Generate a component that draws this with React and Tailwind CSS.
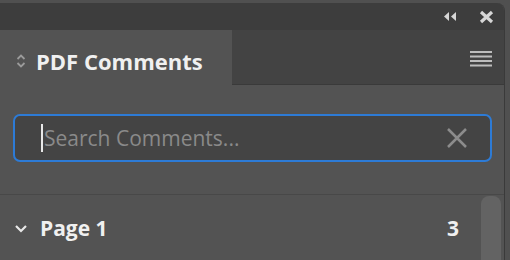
import React from 'react';

function ChevronUpDown() {
  return (
    <svg width="10" height="18" viewBox="0 0 10 18" fill="none" stroke="#9a9a9a" strokeWidth="1.8">
      <path d="M1.5 7 L5 3.5 L8.5 7" />
      <path d="M1.5 11 L5 14.5 L8.5 11" />
    </svg>
  );
}

function App() {
  return (
    <div className="w-[510px] h-[260px] bg-[#505050] overflow-hidden pt-[3px]" style={{ fontFamily: '"Open Sans", "Noto Sans", sans-serif' }}>
      <div className="w-[505px] h-[257px] bg-[#535353] rounded-tr-[8px] border-r border-[#3a3a3a] flex flex-col overflow-hidden">
        {/* title strip */}
        <div className="h-[28px] bg-[#3d3d3d] flex items-center justify-end pr-[10px] gap-[22px]">
          <svg width="14" height="11" viewBox="0 0 14 11" fill="#d6d6d6">
            <path d="M6 1 L1 5.5 L6 10 Z" />
            <path d="M13 1 L8 5.5 L13 10 Z" />
          </svg>
          <svg width="15" height="14" viewBox="0 0 15 14" stroke="#d6d6d6" strokeWidth="3.2">
            <path d="M2 2 L13 12 M13 2 L2 12" />
          </svg>
        </div>
        {/* tabs */}
        <div className="h-[57px] flex">
          <div className="w-[232px] bg-[#535353] flex items-center pl-[16px] pt-[6px] gap-[10px]">
            <ChevronUpDown />
            <span className="text-[22px] font-bold text-[#f0f0f0] leading-none">PDF Comments</span>
          </div>
          <div className="flex-1 bg-[#434343] border-b border-[#3a3a3a] flex items-center justify-end pr-[12px] pt-[4px]">
            <svg width="22" height="16" viewBox="0 0 22 16" fill="#bdbdbd">
              <rect x="0" y="0" width="22" height="2" />
              <rect x="0" y="4.5" width="22" height="2" />
              <rect x="0" y="9" width="22" height="2" />
              <rect x="0" y="13.5" width="22" height="2" />
            </svg>
          </div>
        </div>
        {/* search */}
        <div className="px-[13px] pt-[29px] pb-[32px] border-b border-[#484848]">
          <div className="h-[48px] w-[479px] rounded-[7px] border-2 border-[#2d7bd6] bg-[#444444] flex items-center pl-[26px] pr-[22px]">
            <div className="w-[2px] h-[28px] bg-[#e8e8e8] mr-[1px]" />
            <span className="flex-1 text-[21px] text-[#8a8a8a] leading-none">Search Comments...</span>
            <svg width="22" height="22" viewBox="0 0 22 22" stroke="#8c8c8c" strokeWidth="2.5">
              <path d="M2 2 L20 20 M20 2 L2 20" />
            </svg>
          </div>
        </div>
        {/* list */}
        <div className="flex-1 flex">
          <div className="flex-1 flex items-center h-[65px] pl-[14px] pr-[22px] pt-[2px]">
            <svg width="14" height="10" viewBox="0 0 14 10" fill="none" stroke="#e8e8e8" strokeWidth="2.2">
              <path d="M2 2 L7 7 L12 2" />
            </svg>
            <span className="ml-[12px] flex-1 text-[21px] font-bold text-[#f0f0f0] leading-none">Page 1</span>
            <span className="text-[21px] font-bold text-[#f0f0f0] leading-none">3</span>
          </div>
          <div className="w-[20px] mr-[3px] mt-[1px] bg-[#636363] rounded-t-[8px]" />
        </div>
      </div>
    </div>
  );
}

export default App;
